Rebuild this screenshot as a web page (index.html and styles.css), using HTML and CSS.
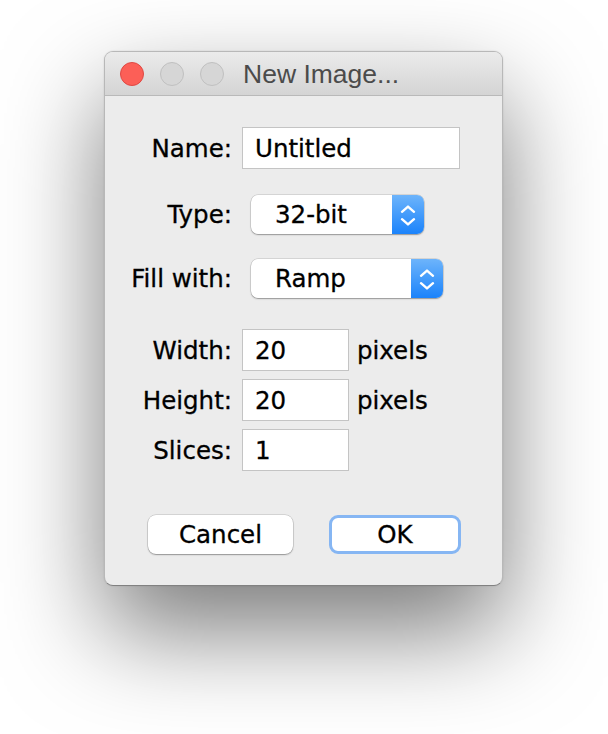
FILE: index.html
```html
<!DOCTYPE html>
<html>
<head>
<meta charset="utf-8">
<title>New Image...</title>
<link rel="stylesheet" href="styles.css">
</head>
<body>
<div class="desk">
  <div class="window">
    <div class="titlebar">
      <div class="lights">
        <span class="light close"></span>
        <span class="light"></span>
        <span class="light"></span>
      </div>
      <div class="title">New Image...</div>
    </div>
    <div class="content">
      <div class="row r-name">
        <span class="lbl">Name:</span>
        <div class="field f-name">Untitled</div>
      </div>
      <div class="row r-type">
        <span class="lbl">Type:</span>
        <div class="popup p-type">
          <span class="ptext">32-bit</span>
          <span class="pbtn"><svg width="32" height="39" viewBox="0 0 32 39"><path d="M10 16.8 L16 11.6 L22 16.8 M10 24.2 L16 29.4 L22 24.2" fill="none" stroke="#fff" stroke-width="2.4" stroke-linecap="round" stroke-linejoin="round"/></svg></span>
        </div>
      </div>
      <div class="row r-fill">
        <span class="lbl">Fill with:</span>
        <div class="popup p-fill">
          <span class="ptext">Ramp</span>
          <span class="pbtn"><svg width="32" height="39" viewBox="0 0 32 39"><path d="M10 16.8 L16 11.6 L22 16.8 M10 24.2 L16 29.4 L22 24.2" fill="none" stroke="#fff" stroke-width="2.4" stroke-linecap="round" stroke-linejoin="round"/></svg></span>
        </div>
      </div>
      <div class="row r-width">
        <span class="lbl">Width:</span>
        <div class="field f-num">20</div>
        <span class="unit">pixels</span>
      </div>
      <div class="row r-height">
        <span class="lbl">Height:</span>
        <div class="field f-num">20</div>
        <span class="unit">pixels</span>
      </div>
      <div class="row r-slices">
        <span class="lbl">Slices:</span>
        <div class="field f-num">1</div>
      </div>
      <div class="buttons">
        <div class="btn b-cancel">Cancel</div>
        <div class="btn b-ok">OK</div>
      </div>
    </div>
  </div>
</div>
</body>
</html>
```

FILE: styles.css
```css
html, body {
  margin: 0;
  padding: 0;
  background: #ffffff;
}

.desk {
  padding: 51px 105px 148px 104px;
  width: 399px;
}

.window {
  width: 399px;
  height: 535px;
  box-sizing: border-box;
  border: 1px solid rgba(0, 0, 0, 0.22);
  border-bottom-color: rgba(0, 0, 0, 0.45);
  border-radius: 9px;
  background: #ececec;
  box-shadow: 0 45px 100px rgba(0, 0, 0, 0.52), 0 0 2px rgba(0, 0, 0, 0.12);
  overflow: hidden;
  font-family: "DejaVu Sans", sans-serif;
  font-size: 24.5px;
  color: #000;
  -webkit-text-stroke: 0.3px #000;
}

.titlebar {
  height: 43px;
  border-bottom: 1px solid #b9b9b9;
  background: linear-gradient(#ebebeb, #d4d4d4);
  display: flex;
  align-items: center;
  padding-left: 15px;
}

.lights {
  display: flex;
  gap: 16px;
}

.light {
  width: 24px;
  height: 24px;
  box-sizing: border-box;
  border-radius: 50%;
  background: #d6d6d6;
  border: 1px solid #c0c0c0;
}

.light.close {
  background: #fc5f57;
  border-color: #df4843;
}

.title {
  margin-left: 19px;
  padding-top: 2px;
  font-family: "Liberation Sans", Arial, sans-serif;
  font-size: 26.5px;
  color: #4b4b4b;
  -webkit-text-stroke: 0;
}

.content {
  padding: 31px 0 31px 0;
  display: flex;
  flex-direction: column;
}

.row {
  display: flex;
  align-items: center;
}

.r-type { margin-top: 26px; }
.r-fill { margin-top: 25px; }
.r-width { margin-top: 31px; }
.r-height { margin-top: 8px; }
.r-slices { margin-top: 8px; }

.lbl {
  width: 127px;
  text-align: right;
  margin-right: 10px;
  white-space: nowrap;
}

.field {
  height: 42px;
  box-sizing: border-box;
  border: 1px solid #c4c4c4;
  background: #fff;
  padding-left: 12px;
  display: flex;
  align-items: center;
  white-space: nowrap;
}

.f-name { width: 218px; }
.f-num { width: 107px; }

.unit {
  margin-left: 8px;
}

.popup {
  margin-left: 9px;
  height: 39px;
  box-sizing: border-box;
  border-radius: 7px;
  background: #fff;
  box-shadow: 0 0 0 0.5px rgba(0, 0, 0, 0.18), 0 1px 1.5px rgba(0, 0, 0, 0.3);
  display: flex;
  align-items: center;
  overflow: hidden;
}

.p-type { width: 173px; }
.p-fill { width: 192px; }

.ptext {
  flex: 1;
  padding-left: 24px;
  white-space: nowrap;
}

.pbtn {
  width: 32px;
  height: 39px;
  background: linear-gradient(#6db4fb, #1b83fb);
  display: block;
}

.pbtn svg {
  display: block;
}

.buttons {
  margin-top: 44px;
  display: flex;
  justify-content: center;
  gap: 36px;
  padding-left: 2px;
}

.btn {
  height: 39px;
  box-sizing: border-box;
  border-radius: 8px;
  background: #fff;
  display: flex;
  align-items: center;
  justify-content: center;
}

.b-cancel {
  width: 145px;
  box-shadow: 0 0 0 0.5px rgba(0, 0, 0, 0.2), 0 1px 1.5px rgba(0, 0, 0, 0.3);
}

.b-ok {
  width: 132px;
  border: 3px solid #86b6f3;
  border-radius: 9px;
}
```
